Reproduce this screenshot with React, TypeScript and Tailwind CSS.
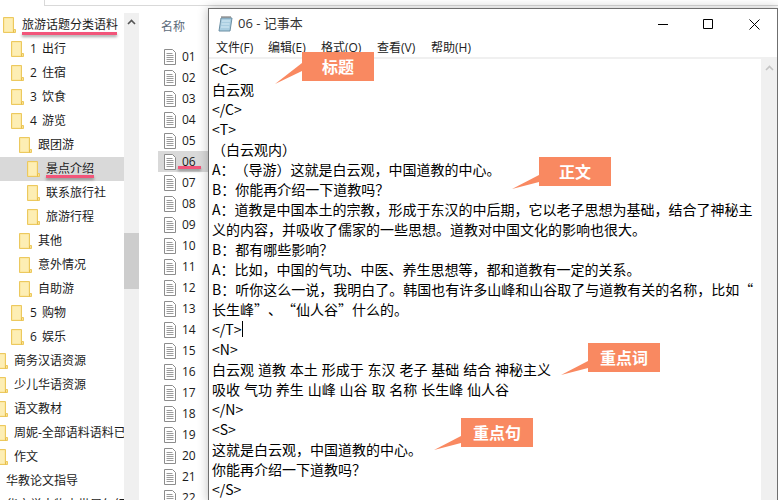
const font = "font-['Open_Sans','Noto_Sans_CJK_SC',sans-serif]";
const noteFont = "font-['Noto_Sans_CJK_SC',sans-serif]";

const tree: { label: string; level: number; mark?: number; active?: boolean }[] = [
  { label: "旅游话题分类语料", level: 0, mark: 95 },
  { label: "1 出行", level: 1 },
  { label: "2 住宿", level: 1 },
  { label: "3 饮食", level: 1 },
  { label: "4 游览", level: 1 },
  { label: "跟团游", level: 2 },
  { label: "景点介绍", level: 3, mark: 48, active: true },
  { label: "联系旅行社", level: 3 },
  { label: "旅游行程", level: 3 },
  { label: "其他", level: 2 },
  { label: "意外情况", level: 2 },
  { label: "自助游", level: 2 },
  { label: "5 购物", level: 1 },
  { label: "6 娱乐", level: 1 },
  { label: "商务汉语资源", level: -1 },
  { label: "少儿华语资源", level: -1 },
  { label: "语文教材", level: -1 },
  { label: "周妮-全部语料语料已整理", level: -1 },
  { label: "作文", level: -1 },
  { label: "华教论文指导", level: -2 },
  { label: "华文学人物去世周年纪念", level: -2 },
];

const files = Array.from({ length: 22 }, (_, i) => String(i + 1).padStart(2, "0"));

const note = [
  "<C>",
  "白云观",
  "</C>",
  "<T>",
  "（白云观内）",
  "A：（导游）这就是白云观，中国道教的中心。",
  "B：你能再介绍一下道教吗？",
  "A：道教是中国本土的宗教，形成于东汉的中后期，它以老子思想为基础，结合了神秘主",
  "义的内容，并吸收了儒家的一些思想。道教对中国文化的影响也很大。",
  "B：都有哪些影响？",
  "A：比如，中国的气功、中医、养生思想等，都和道教有一定的关系。",
  "B：听你这么一说，我明白了。韩国也有许多山峰和山谷取了与道教有关的名称，比如“",
  "长生峰”、“仙人谷”什么的。",
  "</T>",
  "<N>",
  "白云观 道教 本土 形成于 东汉 老子 基础 结合 神秘主义",
  "吸收 气功 养生 山峰 山谷 取 名称 长生峰 仙人谷",
  "</N>",
  "<S>",
  "这就是白云观，中国道教的中心。",
  "你能再介绍一下道教吗？",
  "</S>",
];

function FolderIcon() {
  return (
    <svg width="13" height="16" viewBox="0 0 13 16" className="shrink-0">
      <path d="M.5.5h10v12h2v3H.5z" fill="#fbe291" stroke="#ecc95e" />
      <path d="M1.5 1.5h8v13h-8z" fill="#fdeeb4" />
      <path d="M10.5 12.5v3" stroke="#e6bd4b" />
    </svg>
  );
}

function FileIcon() {
  return (
    <svg width="12" height="16" viewBox="0 0 12 16" className="shrink-0">
      <path d="M.5.5h8l3 3v12H.5z" fill="#fff" stroke="#8c8c8c" />
      <path d="M2.5 4.5h6M2.5 6.5h7M2.5 8.5h7M2.5 10.5h7M2.5 12.5h7" stroke="#9a9a9a" />
    </svg>
  );
}

function Mark({ width, className }: { width: number; className: string }) {
  return (
    <span
      className={`absolute h-[3px] bg-[#f2557a] shadow-[0_2px_3px_rgba(0,0,0,0.35)] ${className}`}
      style={{ width }}
    />
  );
}

function Callout({ text, className, tail }: { text: string; className: string; tail: string }) {
  return (
    <div className={`absolute h-[29px] w-[72px] bg-[#f98961] text-center text-[16px] font-bold leading-[28px] text-white ${noteFont} ${className}`}>
      <svg width="27" height="21" viewBox="0 0 27 21" className="absolute left-[-27px] top-[11px]">
        <path d={tail} fill="#f98961" />
      </svg>
      {text}
    </div>
  );
}

const lowTail = "M0 21 L27 7 V14z";

export default function App() {
  return (
    <div className={`relative flex h-[500px] w-[778px] flex-col overflow-hidden bg-white text-[12px] text-[#1a1a1a] ${font}`}>
      <div className="ml-[44px] h-[6px] w-[734px] shrink-0 border-b border-l border-[#d9d9d9]" />
      <div className="flex min-h-0 flex-1">
        <div className="mt-[7px] w-[124px] shrink-0 overflow-hidden [word-spacing:2px]">
          {tree.map((row) => (
            <div
              key={row.label}
              className={`flex h-6 items-center gap-[6px] whitespace-nowrap ${row.active ? "bg-[#d9d9d9]" : ""}`}
            >
              {row.level >= -1 && (
                <span className="relative flex shrink-0 items-center" style={{ marginLeft: 3 + row.level * 8 }}>
                  <FolderIcon />
                </span>
              )}
              <span className={`relative ${row.level === -2 ? "ml-[6px]" : ""}`}>
                {row.label}
                {row.mark && <Mark width={row.mark} className={row.active ? "left-0 bottom-0" : "left-0 bottom-[-1px]"} />}
              </span>
            </div>
          ))}
        </div>
        <div className="mt-[7px] flex w-[15px] shrink-0 flex-col items-center bg-[#f0f0f0]">
          <svg width="9" height="6" viewBox="0 0 9 6" className="mt-[6px]">
            <path d="M1 5l3.5-3.5L8 5" fill="none" stroke="#555" strokeWidth="1.6" />
          </svg>
          <div className="mt-[208px] h-[56px] w-full bg-[#cdcdcd]" />
        </div>
        <div className="ml-[3px] min-w-0 flex-1">
          <div className="ml-[19px] mt-[12px] h-[28px] text-[#5c6b7a]">名称</div>
          <div className="ml-[16px] w-[50px]">
            {files.map((name) => (
              <div
                key={name}
                className={`flex h-[21px] items-center gap-[6px] pl-[6px] ${name === "06" ? "bg-[#d9d9d9]" : ""}`}
              >
                <FileIcon />
                <span className="relative">
                  {name}
                  {name === "06" && <Mark width={23} className="left-[-4px] bottom-[2px]" />}
                </span>
              </div>
            ))}
          </div>
        </div>
      </div>

      <div className="absolute bottom-[-2px] left-[208px] right-0 top-[8px] flex flex-col border border-[#6f6f6f] bg-white shadow-[0_0_10px_rgba(0,0,0,0.25)]">
        <div className="flex h-[30px] shrink-0 items-center pl-[8px]">
          <svg width="18" height="18" viewBox="0 0 18 18" className="shrink-0">
            <path d="M4 3h11l-2 13H2z" fill="#a9cde0" stroke="#6b8ea3" />
            <path d="M5 3V1M7 3V1M9 3V1M11 3V1M13 3V1" stroke="#666" />
            <path d="M5 6h8M4.5 9h8M4 12h8" stroke="#d7ecf6" />
          </svg>
          <span className="ml-[3px] text-[13px] text-[#333]">06 - 记事本</span>
          <div className="ml-auto flex items-center pr-[17px]">
            <svg width="11" height="11" viewBox="0 0 11 11" className="mr-[34px]">
              <path d="M0 5.5h10" stroke="#000" />
            </svg>
            <svg width="11" height="11" viewBox="0 0 11 11" className="mr-[35px]">
              <path d="M.5.5h9v9h-9z" fill="none" stroke="#000" />
            </svg>
            <svg width="11" height="11" viewBox="0 0 11 11">
              <path d="M.5.5l10 10M10.5.5l-10 10" stroke="#000" />
            </svg>
          </div>
        </div>
        <div className="flex h-[20px] shrink-0 items-center border-b-2 border-[#f0f0f0] pl-[7px] text-[12px] text-[#222]">
          <span className="w-[52px]">文件(F)</span>
          <span className="w-[53px]">编辑(E)</span>
          <span className="w-[56px]">格式(O)</span>
          <span className="w-[54px]">查看(V)</span>
          <span>帮助(H)</span>
        </div>
        <div className="flex min-h-0 flex-1">
          <div className={`min-w-0 flex-1 overflow-hidden pl-[3px] text-[14px] leading-[20px] text-black [text-spacing-trim:space-all] [word-spacing:0.75px] ${noteFont}`}>
            {note.map((line, i) => (
              <div key={i} className="h-5 whitespace-pre">
                {line}
                {line === "</T>" && <span className="ml-[1px] inline-block h-[16px] w-px bg-black align-[-2px]" />}
              </div>
            ))}
          </div>
          <div className="flex w-[16px] shrink-0 justify-center bg-[#f0f0f0] pt-[6px]">
            <svg width="9" height="6" viewBox="0 0 9 6">
              <path d="M1 5l3.5-3.5L8 5" fill="none" stroke="#c4c4c4" strokeWidth="1.6" />
            </svg>
          </div>
        </div>
      </div>

      <Callout text="标题" className="left-[302px] top-[52px]" tail="M0 21 L27 0 V8z" />
      <Callout text="正文" className="left-[539px] top-[157px]" tail={lowTail} />
      <Callout text="重点词" className="left-[588px] top-[343px]" tail={lowTail} />
      <Callout text="重点句" className="left-[461px] top-[418px]" tail={lowTail} />
    </div>
  );
}
